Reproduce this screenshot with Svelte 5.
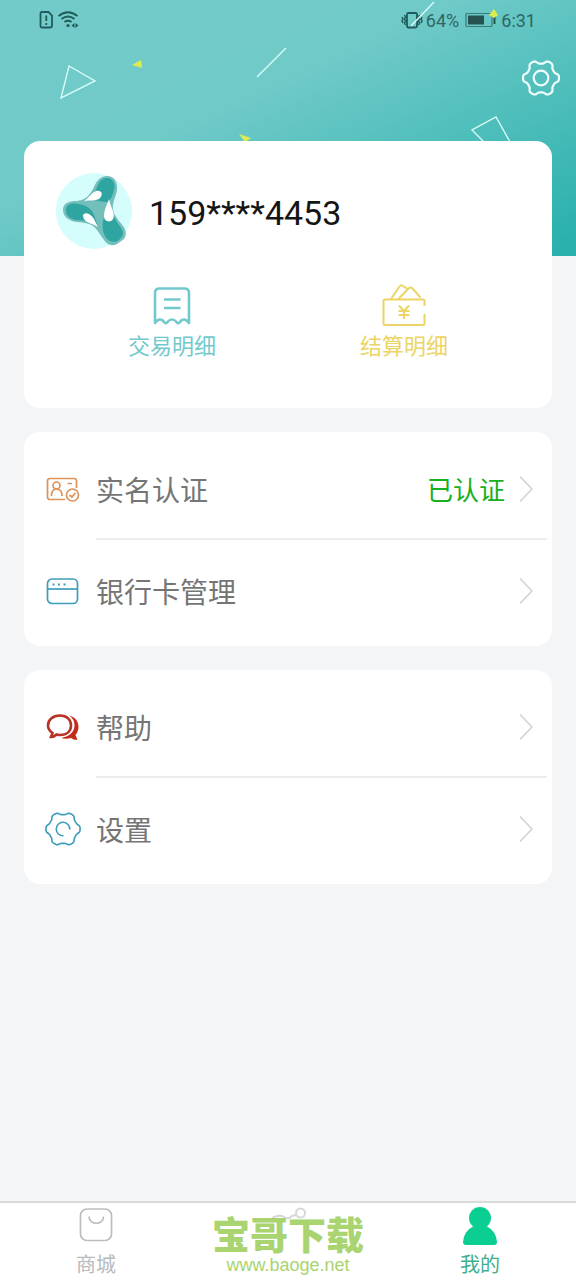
<script lang="ts">
	type Row = { id: string; label: string; status?: string };

	const groups: Row[][] = [
		[
			{ id: 'verify', label: '实名认证', status: '已认证' },
			{ id: 'card', label: '银行卡管理' }
		],
		[
			{ id: 'help', label: '帮助' },
			{ id: 'settings', label: '设置' }
		]
	];

	// six-toothed cog outline around 20,20
	function cog(outer: number, inner: number) {
		const mid = (outer + inner) / 2;
		const amp = (outer - inner) / 2;
		const points: string[] = [];
		for (let deg = 0; deg < 360; deg += 4) {
			const a = (deg * Math.PI) / 180;
			const r = mid + (amp * Math.tanh(1.8 * Math.cos(6 * a))) / Math.tanh(1.8);
			points.push(`${(20 + r * Math.cos(a)).toFixed(2)} ${(20 + r * Math.sin(a)).toFixed(2)}`);
		}
		return `M${points.join('L')}Z`;
	}

	const cogPath = cog(18, 14.4);
</script>

<div class="page">
	<header class="hero">
		<svg class="confetti" width="576" height="256" viewBox="0 0 576 256" aria-hidden="true">
			<g fill="none" stroke="#d8fbf8" stroke-width="1.4">
				<path d="M69 66 95 81 61 98Z" />
				<path d="M257 77 286 48" />
				<path d="M411 26 434 2" />
				<path d="M484 142 472 130 496 117 510 142" />
			</g>
			<g fill="#dcec50">
				<path d="M132 65 141 60 142 68Z" />
				<path d="M239 134 251 138 245 142Z" />
				<path d="M489 15 494 9 498 15 494 18Z" />
			</g>
		</svg>
		<div class="status-bar">
			<svg width="40" height="20" viewBox="0 0 40 20" fill="none" stroke="#1f5c5a" stroke-width="1.8">
				<path d="M3 2H9.5L13 5.5V16Q13 17.5 11.5 17.5H3Q1.5 17.5 1.5 16V3.5Q1.5 2 3 2Z" />
				<path d="M7.3 5.5V11M7.3 13V15" />
				<path d="M19.5 6Q29 -1.5 38.5 6M22.5 9Q29 4 35.5 9M25.5 12Q29 9.5 32.5 12" />
				<circle cx="29" cy="15.5" r="1.6" fill="#1f5c5a" stroke="none" />
				<path d="M35.5 13 32.5 15.5 35.5 18ZM36.5 13 39.5 15.5 36.5 18Z" fill="#1f5c5a" stroke="none" />
			</svg>
			<div class="status-right">
				<svg width="22" height="18" viewBox="0 0 22 18" fill="none" stroke="#1f5c5a">
					<rect x="6" y="2" width="10" height="14.5" rx="1.5" stroke-width="1.8" />
					<path d="M3.5 4 4.5 6 3.5 8 4.5 10 3.5 12 4.5 14M1 6 2 8 1 10 2 12M18.5 4 17.5 6 18.5 8 17.5 10 18.5 12 17.5 14M21 6 20 8 21 10 20 12" stroke-width="1.5" />
				</svg>
				<span>64%</span>
				<svg class="battery" width="31" height="18" viewBox="0 0 31 18">
					<rect x="1" y="2.5" width="26" height="13" rx="1" fill="none" stroke="#3b7b79" stroke-width="1.2" />
					<rect x="3" y="4.5" width="16" height="9" fill="#245350" />
					<rect x="28.5" y="5" width="2" height="8" fill="#245350" />
				</svg>
				<span>6:31</span>
			</div>
		</div>
		<div class="toolbar">
			<button class="gear" aria-label="设置">
				<svg width="40" height="40" viewBox="0 0 40 40" fill="none" stroke="#effffe" stroke-width="2.2">
					<path d={cogPath} stroke-linejoin="round" />
					<circle cx="20" cy="20" r="7.3" />
				</svg>
			</button>
		</div>
	</header>

	<main>
		<section class="card profile">
			<div class="user">
				<svg width="76" height="76" viewBox="0 0 76 76" aria-hidden="true">
					<circle cx="38" cy="38" r="38" fill="#d4fdfc" />
					<path
						d="M51 3C58 3 62 9 61 17C60 24 56 29 57 36C58 43 62 46 67 53C70 57 71 62 68 66L61 71C55 74 51 71 48 67L41 57C36 50 30 50 21 49C12 48 7 43 7 37C7 30 13 28 21 28C31 27 35 20 38 14C41 7 45 3 51 3Z"
						fill="#73bfbc"
					/>
					<path d="M51 5C57 5 60 11 58 17C57 22 55 26 52 29C46 29 42 28 34 26C38 22 40 16 42 12C44 7 47 5 51 5Z" fill="#2fa5a2" />
					<path d="M10 36C11 29 20 30 27 32C33 34 36 37 38 42C40 47 41 50 42 54C36 47 28 48 20 47C13 46 9 41 10 36Z" fill="#2fa5a2" />
					<path d="M54 30C55 39 58 44 63 52C68 58 68 62 64 66C59 71 52 69 49 63C46 57 46 50 48 44C49 39 52 35 54 30Z" fill="#2fa5a2" />
					<path d="M40 18C46 17 48 22 43 26C39 28 34 27 28 28C33 25 35 20 40 18Z" fill="#fff" />
					<path d="M27 42C30 38 35 41 38 46C40 50 41 52 42 54C36 50 27 50 27 42Z" fill="#fff" />
					<path d="M53 26C54 33 60 41 57 46C55 50 48 49 48 43C48 37 51 32 53 26Z" fill="#fff" />
				</svg>
				<h1>159****4453</h1>
			</div>
			<nav class="actions">
				<a class="trade" href="#trade">
					<svg width="46" height="46" viewBox="0 0 46 46" fill="none" stroke="currentColor" stroke-width="2.6">
						<path d="M6 40V10Q6 5.5 10.5 5.5H35.5Q40 5.5 40 10V40Q37.5 36.5 35 36.5Q32.5 36.5 31 39Q29 41.5 27 38.5Q25.5 36.5 23 36.5Q20.5 36.5 19 38.5Q17 41.5 15 39Q13.5 36.5 11 36.5Q8.5 36.5 6 40Z" stroke-linejoin="round" />
						<path d="M15 16.5H31.5M15 25H31.5" />
					</svg>
					<span>交易明细</span>
				</a>
				<a class="settle" href="#settle">
					<svg width="46" height="46" viewBox="0 0 46 46" fill="none" stroke="currentColor" stroke-width="2" stroke-linejoin="round">
						<path d="M43.5 23V18Q43.5 16.5 42 16.5H4Q2.5 16.5 2.5 18V40.5Q2.5 42 4 42H42Q43.5 42 43.5 40.5V31" />
						<path d="M10 16 18.5 3.5Q20 1.5 22 3L26.500 6M17.500 16 27.500 5.500Q29.500 3.500 31.500 5.500L39.500 14.500" />
						<path d="M18 22.5 23 28 28 22.5M23 28V36M17.5 28H28.5M17.5 32H28.5" />
					</svg>
					<span>结算明细</span>
				</a>
			</nav>
		</section>

		{#each groups as rows}
			<nav class="card group">
				{#each rows as row (row.id)}
					<a class="row" href="#{row.id}">
						<span class="row-icon">
							{#if row.id === 'verify'}
								<svg width="36" height="36" viewBox="0 0 36 36" fill="none" stroke="#dc935c" stroke-width="1.7">
									<path d="M20 28.5H5Q2.5 28.5 2.5 26V10Q2.5 7.5 5 7.5H29Q31.5 7.5 31.5 10V17" />
									<circle cx="11.5" cy="14.5" r="3.5" />
									<path d="M6.500 25Q6.500 18 11.500 18Q17 18 17 25M22.500 12.500H27" />
									<circle cx="27.5" cy="24" r="6" />
									<path d="M24.500 24 27 26 30.500 22" />
								</svg>
							{:else if row.id === 'card'}
								<svg width="36" height="36" viewBox="0 0 36 36" fill="none" stroke="#3e9dba" stroke-width="1.7">
									<rect x="2.5" y="6" width="30" height="24.5" rx="4.5" />
									<path d="M3 16H32" />
									<path d="M7.5 11.5H9.5M13 11.5H15M18.5 11.5H20.5" stroke-width="2" />
								</svg>
							{:else if row.id === 'help'}
								<svg width="36" height="36" viewBox="0 0 36 36">
									<path d="M24 6.5C30 8 33.5 12 33.5 18C33.5 21.5 32 24 30.5 26L32.5 31Q28 31 26 29C23 30 19 30 16 29C26 27 31 16 24 6.5Z" fill="#c52b1a" />
									<path d="M15 6.5C22.5 6.5 27 11 27 16.5C27 22 22 26 15 26C13.5 26 12.5 26 11.5 25.5Q9 28 6 28L7.5 24C4.5 22 3 19.5 3 16.5C3 11 7.5 6.5 15 6.5Z" fill="none" stroke="#fff" stroke-width="5" />
									<path d="M15 6.5C22 6.5 26 11 26 16.5C26 22 22 26 15 26C13.5 26 12.5 26 11.5 25.5Q9 28 6 28L7.5 24C4.5 22 3 19.5 3 16.5C3 11 7.5 6.5 15 6.5Z" fill="#fff" stroke="#b93226" stroke-width="2.6" />
								</svg>
							{:else}
								<svg width="36" height="36" viewBox="0 0 40 40" fill="none" stroke="#3e9dba" stroke-width="1.8">
									<path d={cog(19, 16)} />
									<path d="M20.5 27.5A7.5 7.5 0 1 1 27.5 20.5" />
								</svg>
							{/if}
						</span>
						<span class="row-body">
							<span class="label">{row.label}</span>
							{#if row.status}
								<span class="status">{row.status}</span>
							{/if}
							<svg width="14" height="28" viewBox="0 0 14 28" fill="none" stroke="#d2d2d4" stroke-width="1.6">
								<path d="M1 1.5 13 14 1 26.5" />
							</svg>
						</span>
					</a>
				{/each}
			</nav>
		{/each}
	</main>

	<nav class="tabs">
		<a class="tab" href="#mall">
			<svg width="36" height="36" viewBox="0 0 36 36" fill="none" stroke="#bbbec0" stroke-width="1.7">
				<rect x="2.5" y="2" width="31" height="31.5" rx="6.5" />
				<path d="M11 9.5C11 18.5 25.5 18.5 25.5 9.5" />
			</svg>
			<span>商城</span>
		</a>
		<a class="tab" href="#home" aria-label="首页">
			<svg width="60" height="36" viewBox="0 0 60 36" fill="none" stroke="#d6d7d9" stroke-width="2">
				<path d="M14 11Q22 7 26 10Q30 13 34 9L38 8" />
				<circle cx="42.5" cy="6" r="4.5" />
			</svg>
		</a>
		<a class="tab active" href="#mine">
			<svg width="36" height="40" viewBox="0 0 36 40" fill="#0bcf92">
				<circle cx="18" cy="11" r="11" />
				<path d="M11 19.5H25Q34 24 35 35Q35 38 32 38H4Q1 38 1 35Q2 24 11 19.5Z" />
			</svg>
			<span>我的</span>
		</a>
		<div class="watermark">
			<strong>宝哥下载</strong>
			<span>www.baoge.net</span>
		</div>
	</nav>
</div>

<style>
	:global(body) {
		background: #f3f5f7;
	}

	.page {
		min-height: 100vh;
		display: flex;
		flex-direction: column;
		font-family: 'Noto Sans CJK SC', sans-serif;
	}

	a {
		color: inherit;
		text-decoration: none;
	}

	svg {
		display: block;
		flex-shrink: 0;
	}

	.hero {
		position: relative;
		height: 256px;
		overflow: hidden;
		background: linear-gradient(155deg, #72cbc9 0%, #70cac8 40%, #2bb1ad 96%);
	}

	.confetti {
		position: absolute;
		top: 0;
		right: 0;
	}

	.status-bar {
		display: flex;
		justify-content: space-between;
		align-items: center;
		height: 40px;
		padding: 0 40px 0 39px;
		font-family: Roboto, sans-serif;
		font-size: 18px;
		color: #2f6664;
	}

	.status-right {
		display: flex;
		align-items: center;
		gap: 3px;
	}

	.battery {
		margin: 0 2px 0 3px;
	}

	.toolbar {
		display: flex;
		justify-content: flex-end;
		padding: 18px 15px 0;
	}

	.gear {
		padding: 0;
		border: 0;
		background: none;
		cursor: pointer;
	}

	main {
		position: relative;
		flex: 1;
		display: flex;
		flex-direction: column;
		gap: 24px;
		margin-top: -115px;
		padding: 0 24px 24px;
	}

	.card {
		background: #fff;
		border-radius: 16px;
	}

	.profile {
		padding: 32px 32px 49px;
	}

	.user {
		display: flex;
		align-items: center;
		gap: 17px;
	}

	h1 {
		margin: 0;
		padding-top: 4px;
		font-family: Roboto, sans-serif;
		font-size: 34px;
		line-height: 40px;
		font-weight: 400;
		color: #151515;
	}

	.actions {
		display: grid;
		grid-template-columns: 1fr 1fr;
		margin-top: 34px;
	}

	.actions a {
		display: flex;
		flex-direction: column;
		align-items: center;
		font-size: 22px;
		line-height: 30px;
	}

	.trade {
		color: #72c9cd;
	}

	.settle {
		color: #ecd465;
	}

	.group {
		padding: 6px 0 4px;
	}

	.row {
		display: flex;
		height: 102px;
		padding: 0 5px 0 21px;
	}

	.row-icon {
		display: flex;
		align-items: center;
		width: 51px;
	}

	.row-body {
		flex: 1;
		display: flex;
		align-items: center;
		padding-right: 14px;
	}

	.row:not(:last-child) .row-body {
		box-shadow: inset 0 -2px #ededef;
	}

	.label {
		flex: 1;
		font-size: 28px;
		line-height: 40px;
		color: #757575;
	}

	.status {
		margin-right: 14px;
		font-size: 26px;
		line-height: 40px;
		color: #18b01c;
	}

	.tabs {
		position: relative;
		display: grid;
		grid-template-columns: repeat(3, 1fr);
		height: 77px;
		border-top: 2px solid #d9dadc;
		background: #fff;
	}

	.tab {
		display: flex;
		flex-direction: column;
		justify-content: space-between;
		align-items: center;
		padding-top: 4px;
		font-size: 20px;
		line-height: 32px;
		color: #b8bbbe;
	}

	.active {
		color: #3fae8d;
	}

	.watermark {
		position: absolute;
		inset: 8px 0 0;
		display: flex;
		flex-direction: column;
		align-items: center;
		color: #a9d46f;
		pointer-events: none;
	}

	.watermark strong {
		font-size: 38px;
		line-height: 44px;
		font-weight: 900;
	}

	.watermark span {
		font-family: 'Liberation Sans', sans-serif;
		font-size: 18px;
		line-height: 20px;
	}
</style>
